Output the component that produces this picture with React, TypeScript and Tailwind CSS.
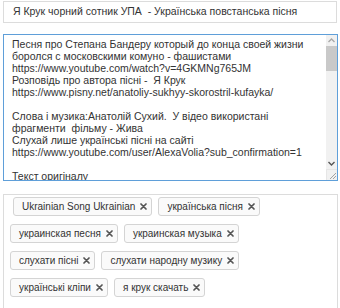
import React from "react";

const lines = [
  "Песня про Степана Бандеру который до конца своей жизни",
  "боролся с московскими комуно - фашистами",
  "https://www.youtube.com/watch?v=4GKMNg765JM",
  "Розповідь про автора пісні -  Я Крук",
  "https://www.pisny.net/anatoliy-sukhyy-skorostril-kufayka/",
  "",
  "Слова і музика:Анатолій Сухий.  У відео використані",
  "фрагменти  фільму - Жива",
  "Слухай лише українські пісні на сайті",
  "https://www.youtube.com/user/AlexaVolia?sub_confirmation=1",
  "",
  "Текст оригіналу",
];

const rows = [
  ["Ukrainian Song Ukrainian", "українська пісня"],
  ["украинская песня", "украинская музыка"],
  ["слухати пісні", "слухати народну музику"],
  ["українські кліпи", "я крук скачать"],
];

function Tag({ label, first }: { label: string; first?: boolean }) {
  return (
    <div
      className={`h-[19px] flex items-center border border-[#d4d4d4] rounded-[3px] bg-[#fafafa] pl-[8px] pr-[4px] text-[10px] text-[#333] ${first ? "ml-[3px]" : ""}`}
    >
      <span className="leading-none">{label}</span>
      <svg width="7" height="7" viewBox="0 0 7 7" className="ml-[5px]">
        <path d="M1 1 L6 6 M6 1 L1 6" stroke="#555" strokeWidth="1.7" strokeLinecap="round" />
      </svg>
    </div>
  );
}

export default function App() {
  return (
    <div
      className="w-[340px] h-[308px] overflow-hidden bg-white pt-px pl-[3px] pr-[3px] text-[10.5px] text-[#333]"
      style={{ fontFamily: "'Liberation Sans', Arial, sans-serif" }}
    >
      <div className="h-[22px] border border-[#dcdcdc] flex items-center pl-[9px]">
        Я Крук чорний сотник УПА&nbsp; - Українська повстанська пісня
      </div>

      <div className="mt-[11px] h-[147px] border border-[#5f9fd9] flex mr-[-1px]">
        <div className="flex-1 overflow-hidden pl-[8px] pt-[3px] leading-[12px] whitespace-pre">
          {lines.map((l, i) => (
            <div key={i} className="h-[12px]">
              {l}
            </div>
          ))}
        </div>
        <div className="w-[11px] bg-[#f1f1f1] flex flex-col">
          <div className="h-[11px] flex items-center justify-center">
            <svg width="7" height="5" viewBox="0 0 7 5">
              <path d="M0.5 4 L3.5 1 L6.5 4" stroke="#a8a8a8" strokeWidth="1.4" fill="none" />
            </svg>
          </div>
          <div className="h-[25px] bg-[#c9c9c9]" />
          <div className="flex-1" />
          <div className="h-[11px] flex items-center justify-center">
            <svg width="7" height="5" viewBox="0 0 7 5">
              <path d="M0.5 1 L3.5 4 L6.5 1" stroke="#555" strokeWidth="1.4" fill="none" />
            </svg>
          </div>
          <div className="h-[11px] bg-[#f1f1f1] border-t border-l border-[#e6e6e6] flex items-end justify-end">
            <svg width="9" height="9" viewBox="0 0 9 9">
              <path d="M8 2 L2 8 M8 5 L5 8" stroke="#9a9a9a" strokeWidth="0.9" />
            </svg>
          </div>
        </div>
      </div>

      <div className="mt-[13px] h-[200px] border border-[#dcdcdc] pt-[2px] pl-[6px] pr-[6px] flex flex-col gap-[8px] mr-[-1px]">
        {rows.map((r, i) => (
          <div key={i} className="flex gap-[6px]">
            {r.map((t, j) => (
              <Tag key={t} label={t} first={i === 0 && j === 0} />
            ))}
          </div>
        ))}
      </div>
    </div>
  );
}
